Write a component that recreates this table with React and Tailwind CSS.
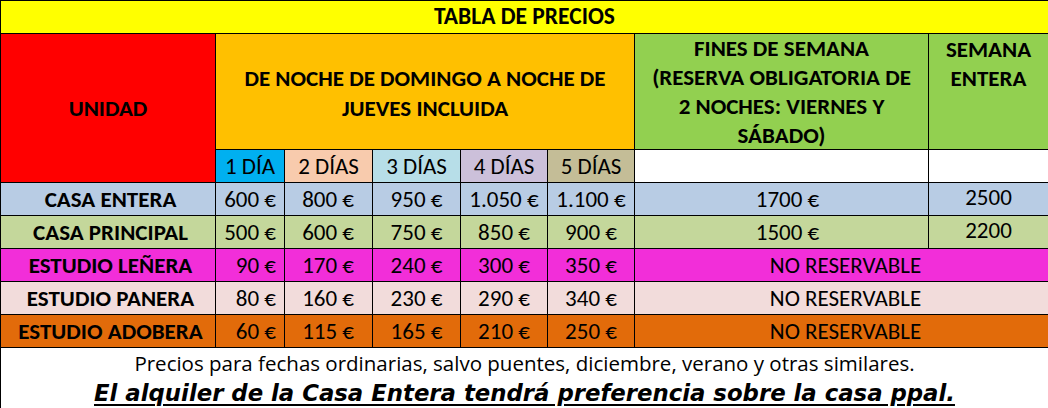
import React from "react";

const F = { fontFamily: "Carlito, Lato, 'Noto Sans', sans-serif" };

const rows = [
  { label: "CASA ENTERA", bg: "bg-[#b8cce4]", vals: ["600 €", "800 €", "950 €", "1.050 €", "1.100 €"], we: "1700 €", wk: "2500" },
  { label: "CASA PRINCIPAL", bg: "bg-[#c4d79b]", vals: ["500 €", "600 €", "750 €", "850 €", "900 €"], we: "1500 €", wk: "2200" },
  { label: "ESTUDIO LEÑERA", bg: "bg-[#f22ed9]", vals: ["90 €", "170 €", "240 €", "300 €", "350 €"] },
  { label: "ESTUDIO PANERA", bg: "bg-[#f2dcdb]", vals: ["80 €", "160 €", "230 €", "290 €", "340 €"] },
  { label: "ESTUDIO ADOBERA", bg: "bg-[#e26b0a]", vals: ["60 €", "115 €", "165 €", "210 €", "250 €"] },
];

const days = [
  { t: "1 DÍA", bg: "bg-[#00b0f0]" },
  { t: "2 DÍAS", bg: "bg-[#f8cbad]" },
  { t: "3 DÍAS", bg: "bg-[#b7dee8]" },
  { t: "4 DÍAS", bg: "bg-[#ccc0da]" },
  { t: "5 DÍAS", bg: "bg-[#c4bd97]" },
];

export default function App() {
  return (
    <div className="w-[1048px] h-[408px] bg-white overflow-hidden text-black" style={F}>
      <div className="grid grid-cols-[214px_68px_87px_87px_86px_86px_293px_119px] grid-rows-[32px_115px_32px_32px_32px_32px_32px_32px] gap-px bg-black pt-px pl-px border-b border-black">
        <div className="col-span-8 bg-[#ffff00] flex items-center justify-center font-bold text-[23.5px] leading-none">
          TABLA DE PRECIOS
        </div>
        <div className="row-span-2 bg-[#ff0000] flex items-center justify-center font-bold text-[23px] leading-none">
          UNIDAD
        </div>
        <div className="col-span-5 bg-[#ffc000] flex flex-col items-center justify-center font-bold text-[23px] leading-[30px] text-center pt-[2px]">
          <span>DE NOCHE DE DOMINGO A NOCHE DE</span>
          <span>JUEVES INCLUIDA</span>
        </div>
        <div className="bg-[#92d050] flex flex-col items-center justify-center font-bold text-[23px] leading-[29px] text-center">
          <span>FINES DE SEMANA</span>
          <span>(RESERVA OBLIGATORIA DE</span>
          <span>2 NOCHES: VIERNES Y</span>
          <span>SÁBADO)</span>
        </div>
        <div className="bg-[#92d050] flex flex-col items-center pt-[1px] font-bold text-[23px] leading-[29px] text-center">
          <span>SEMANA</span>
          <span>ENTERA</span>
        </div>
        {days.map((d) => (
          <div key={d.t} className={`${d.bg} flex items-center justify-center text-[23px] leading-none`}>
            {d.t}
          </div>
        ))}
        <div className="bg-white" />
        <div className="bg-white" />
        {rows.map((r) => (
          <React.Fragment key={r.label}>
            <div className={`${r.bg} flex items-center justify-center font-bold text-[23px] leading-none pl-[5px]`}>
              {r.label}
            </div>
            {r.vals.map((v, i) => (
              <div
                key={i}
                className={`${r.bg} flex items-center text-[23px] leading-none ${i === 0 ? "justify-end pr-[8px]" : i === 1 ? "justify-end pr-[18px]" : "justify-center"}`}
              >
                {v}
              </div>
            ))}
            {r.we ? (
              <>
                <div className={`${r.bg} flex items-center justify-center text-[23px] leading-none pl-[12px]`}>{r.we}</div>
                <div className={`${r.bg} flex items-center justify-center text-[23px] leading-none pb-[3px]`}>{r.wk}</div>
              </>
            ) : (
              <div className={`${r.bg} col-span-2 flex items-center justify-center text-[23px] leading-none pl-[8px]`}>
                NO RESERVABLE
              </div>
            )}
          </React.Fragment>
        ))}
      </div>
      <div className="h-[60px] border-l border-black flex flex-col items-center">
        <div className="text-[20.5px] leading-none mt-[5px]" style={{ fontFamily: "'Open Sans', Lato, sans-serif" }}>
          Precios para fechas ordinarias, salvo puentes, diciembre, verano y otras similares.
        </div>
        <div
          className="text-[22.8px] leading-none mt-[8px] font-bold italic underline decoration-[2px] underline-offset-[3px]"
          style={{ fontFamily: "'DejaVu Sans', 'Liberation Sans', sans-serif" }}
        >
          El alquiler de la Casa Entera tendrá preferencia sobre la casa ppal.
        </div>
      </div>
    </div>
  );
}
